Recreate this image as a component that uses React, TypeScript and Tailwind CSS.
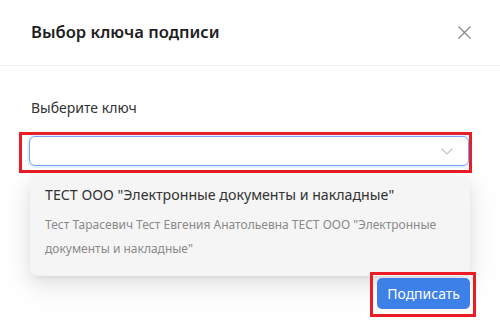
export default function App() {
  return (
    <div className="relative flex h-[333px] w-[500px] flex-col overflow-hidden bg-white font-['Noto_Sans',sans-serif]">
      <div className="flex h-[66px] items-center justify-between border-b border-[#efefef] pl-[31px] pr-[29px]">
        <h1 className="text-[16.6px] font-semibold text-[#1f1f1f]">Выбор ключа подписи</h1>
        <svg width="13" height="13" viewBox="0 0 13 13" className="text-[#8a8a8a]">
          <path d="M0.5 0.5 L12.5 12.5 M12.5 0.5 L0.5 12.5" stroke="currentColor" strokeWidth="1.3" fill="none" />
        </svg>
      </div>

      <div className="relative flex flex-col pl-[19px] pr-[28px] pt-[31px]">
        <label className="ml-[12px] text-[14px] leading-[22px] text-[#333]">Выберите ключ</label>
        {/* highlighted select */}
        <div className="mt-[13px] border-[3px] border-[#ec1c24] pb-[4px] pl-[7px] pt-[1px]">
          <div className="flex h-[30px] items-center justify-end rounded-[6px] border border-[#78a6f5] bg-white pr-[15px] shadow-[0_0_0_2px_rgba(5,145,255,0.1)]">
            <svg width="12" height="7" viewBox="0 0 12 7" className="text-[#c4c4c4]">
              <path d="M0.5 0.5 L6 6 L11.5 0.5" stroke="currentColor" strokeWidth="1.2" fill="none" />
            </svg>
          </div>
        </div>

        {/* dropdown menu */}
        <div className="absolute left-[30px] top-[110px] z-10 w-[440px] rounded-[8px] bg-[#f5f5f5] px-[15px] pb-[15px] pt-[7px] shadow-[0_3px_6px_-4px_rgba(0,0,0,0.12),0_6px_16px_0_rgba(0,0,0,0.08),0_9px_28px_8px_rgba(0,0,0,0.05)]">
          <div className="text-[14.2px] leading-[24px] text-[#333]">
            ТЕСТ ООО "Электронные документы и накладные"
          </div>
          <div className="mt-[6px] text-[12px] leading-[24px] text-[#8a8a8a]">
            Тест Тарасевич Тест Евгения Анатольевна ТЕСТ ООО "Электронные документы и накладные"
          </div>
        </div>
      </div>

      <div className="relative z-20 mt-[99px] flex justify-end pr-[24px]">
        <div className="border-[3px] border-[#ec1c24] pb-[5px] pl-[4px] pr-[3px] pt-[3px]">
          <button className="block h-[31px] rounded-[5px] bg-[#3d80e8] px-[10px] text-[14px] text-white">
            Подписать
          </button>
        </div>
      </div>
    </div>
  );
}
